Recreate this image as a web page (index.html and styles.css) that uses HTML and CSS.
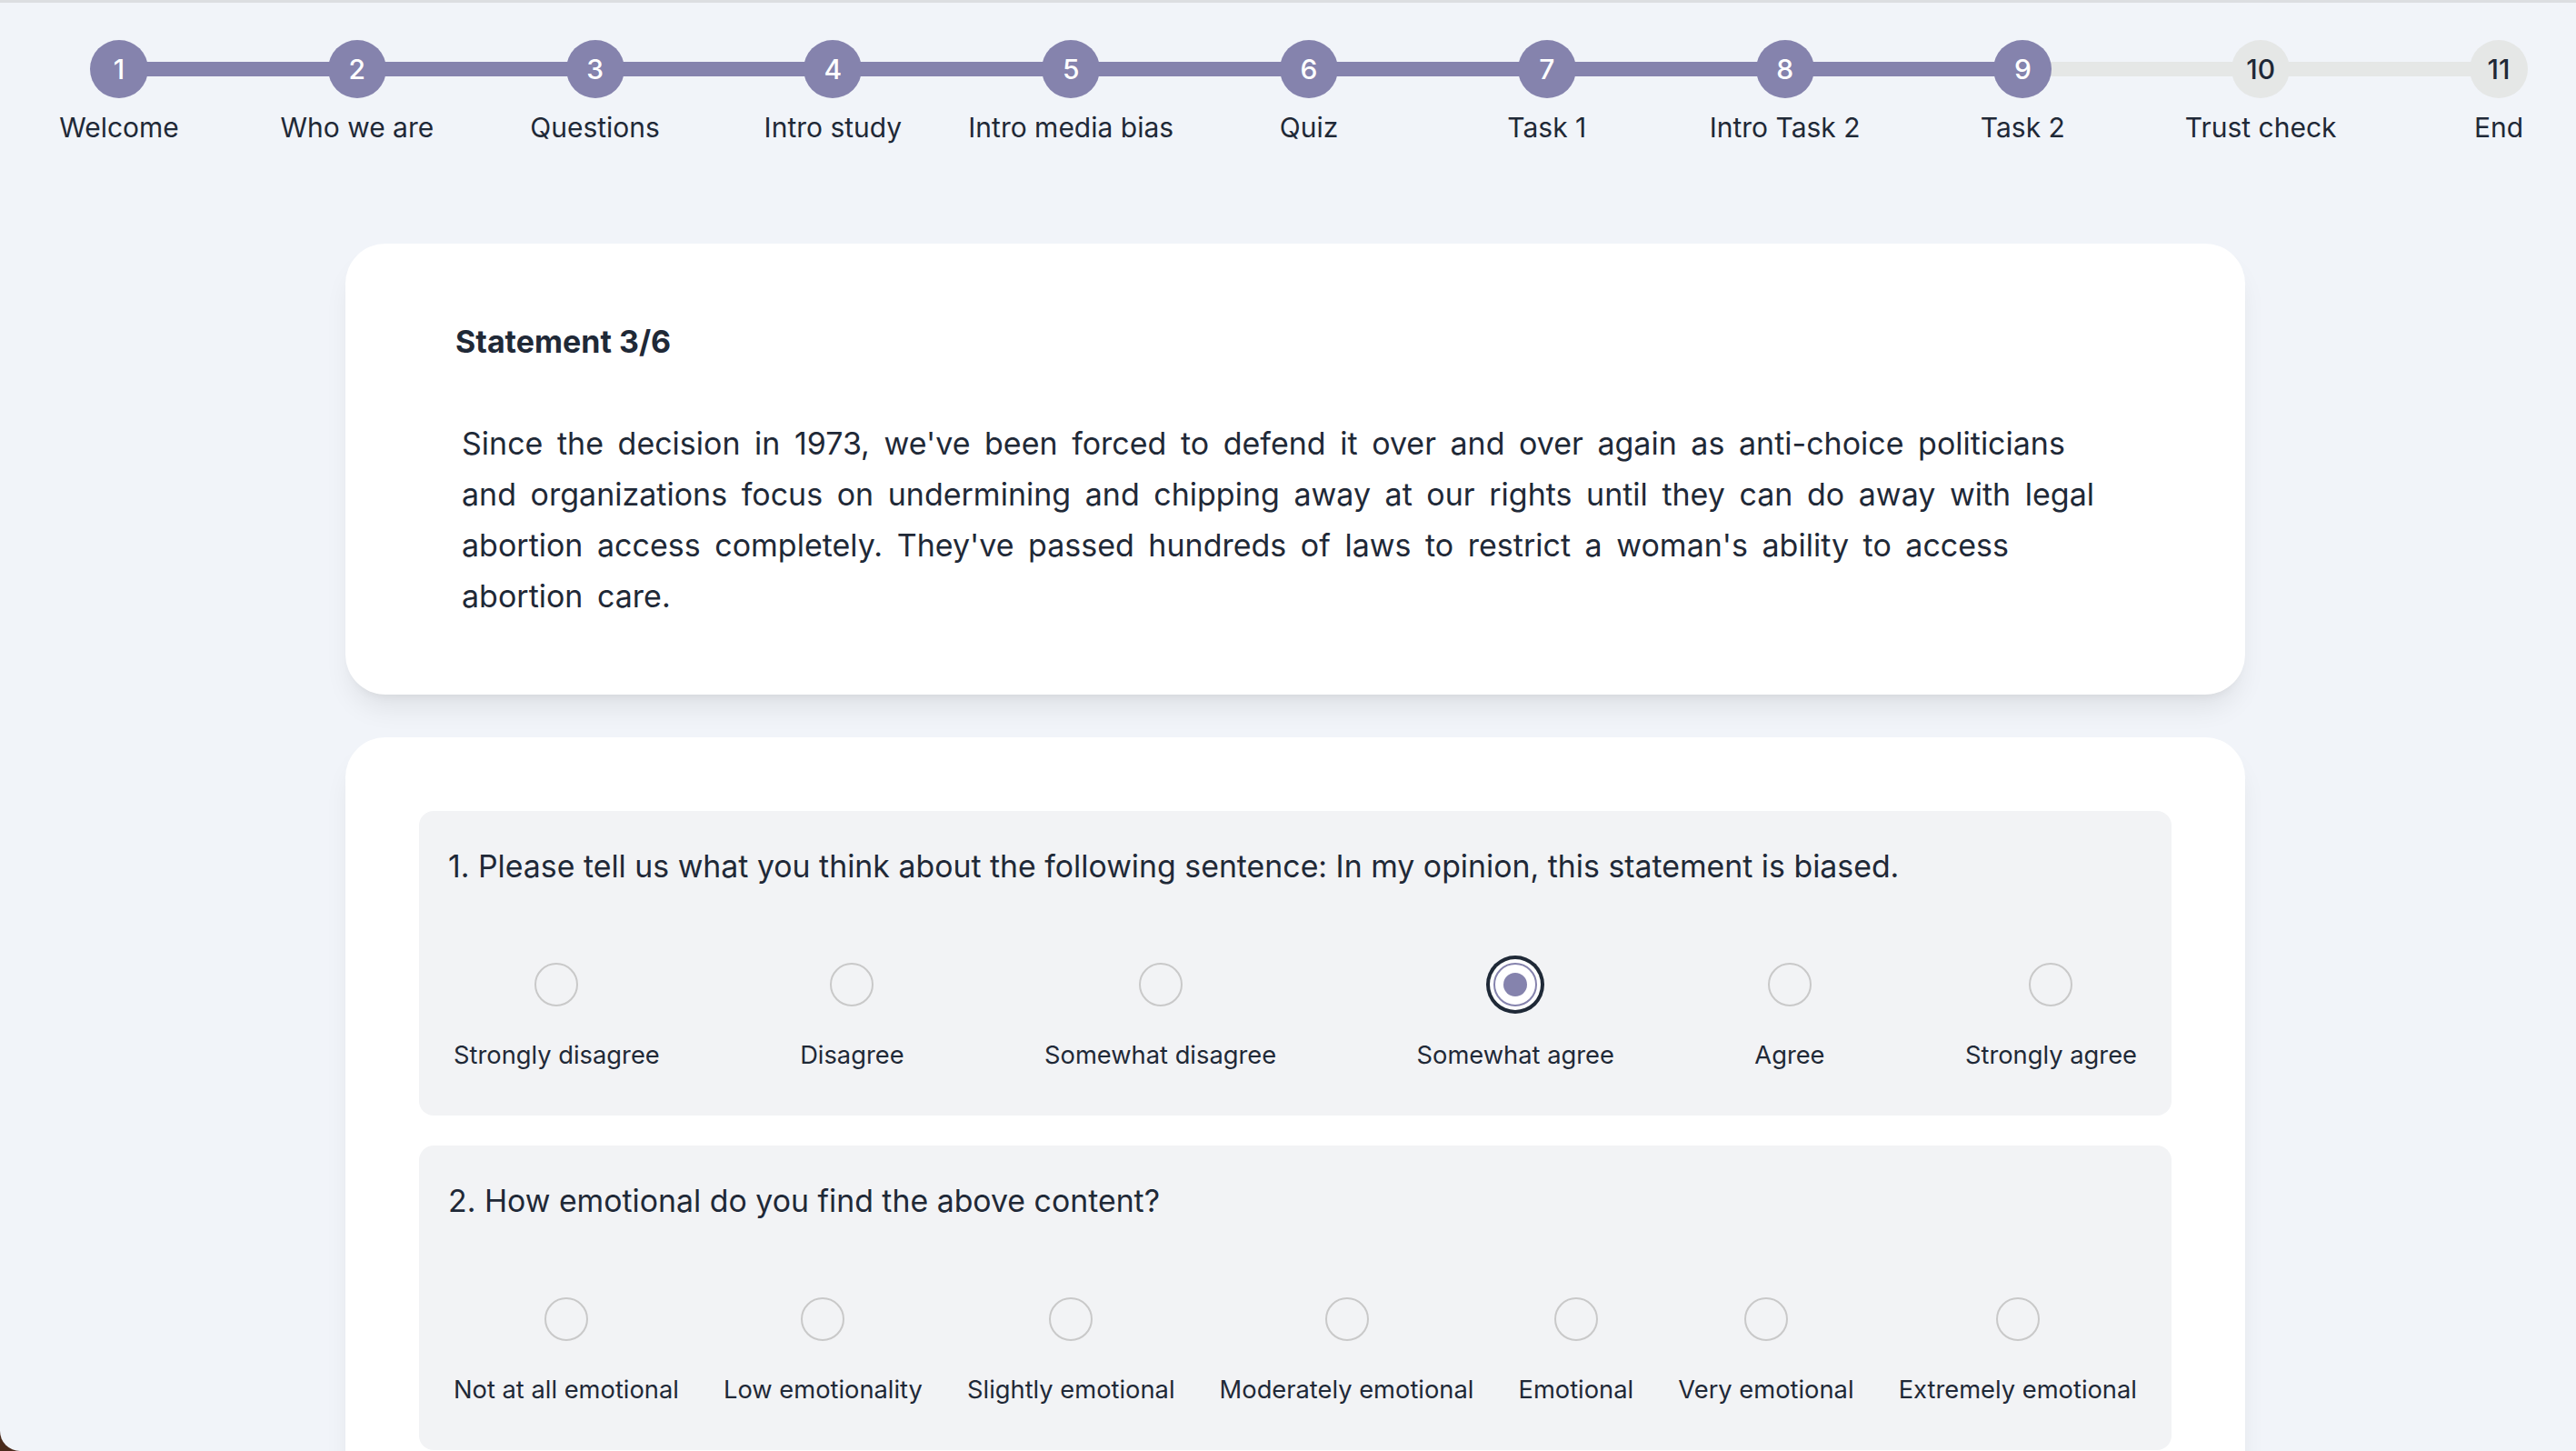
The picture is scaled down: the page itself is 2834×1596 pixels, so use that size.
FILE: index.html
```html
<!DOCTYPE html>
<html lang="en">
<head>
<meta charset="utf-8">
<title>Statement 3/6</title>
<link rel="stylesheet" href="styles.css">
</head>
<body>
<div class="page">
  <nav class="stepper">
    <div class="track"><div class="track-fill"></div></div>
    <div class="step"><span class="dot">1</span><span class="label">Welcome</span></div>
    <div class="step"><span class="dot">2</span><span class="label">Who we are</span></div>
    <div class="step"><span class="dot">3</span><span class="label">Questions</span></div>
    <div class="step"><span class="dot">4</span><span class="label">Intro study</span></div>
    <div class="step"><span class="dot">5</span><span class="label">Intro media bias</span></div>
    <div class="step"><span class="dot">6</span><span class="label">Quiz</span></div>
    <div class="step"><span class="dot">7</span><span class="label">Task 1</span></div>
    <div class="step"><span class="dot">8</span><span class="label">Intro Task 2</span></div>
    <div class="step"><span class="dot">9</span><span class="label">Task 2</span></div>
    <div class="step todo"><span class="dot">10</span><span class="label">Trust check</span></div>
    <div class="step todo"><span class="dot">11</span><span class="label">End</span></div>
  </nav>

  <main class="main">
    <section class="card statement">
      <h2 class="statement-title">Statement 3/6</h2>
      <p class="statement-text">Since the decision in 1973, we've been forced to defend it over and over again as anti-choice politicians and organizations focus on undermining and chipping away at our rights until they can do away with legal abortion access completely. They've passed hundreds of laws to restrict a woman's ability to access abortion care.</p>
    </section>

    <section class="card questions">
      <div class="question">
        <p class="q-text">1. Please tell us what you think about the following sentence: In my opinion, this statement is biased.</p>
        <div class="options">
          <label class="option"><span class="radio"></span><span class="opt-label">Strongly disagree</span></label>
          <label class="option"><span class="radio"></span><span class="opt-label">Disagree</span></label>
          <label class="option"><span class="radio"></span><span class="opt-label">Somewhat disagree</span></label>
          <label class="option"><span class="radio checked"></span><span class="opt-label">Somewhat agree</span></label>
          <label class="option"><span class="radio"></span><span class="opt-label">Agree</span></label>
          <label class="option"><span class="radio"></span><span class="opt-label">Strongly agree</span></label>
        </div>
      </div>
      <div class="question">
        <p class="q-text">2. How emotional do you find the above content?</p>
        <div class="options">
          <label class="option"><span class="radio"></span><span class="opt-label">Not at all emotional</span></label>
          <label class="option"><span class="radio"></span><span class="opt-label">Low emotionality</span></label>
          <label class="option"><span class="radio"></span><span class="opt-label">Slightly emotional</span></label>
          <label class="option"><span class="radio"></span><span class="opt-label">Moderately emotional</span></label>
          <label class="option"><span class="radio"></span><span class="opt-label">Emotional</span></label>
          <label class="option"><span class="radio"></span><span class="opt-label">Very emotional</span></label>
          <label class="option"><span class="radio"></span><span class="opt-label">Extremely emotional</span></label>
        </div>
      </div>
    </section>
  </main>
</div>
</body>
</html>
```

FILE: styles.css
```css
html {
  background: #4a2b1c;
}

body {
  margin: 0;
  font-family: Inter, "Noto Sans", "Liberation Sans", sans-serif;
  color: #1f2937;
}

.page {
  box-sizing: border-box;
  height: 1596px;
  overflow: hidden;
  background: #f1f4f9;
  border-top: 3px solid #dcdee1;
  border-bottom-left-radius: 22px;
}

/* ---------- stepper ---------- */
.stepper {
  position: relative;
  display: grid;
  grid-template-columns: repeat(11, 150px);
  column-gap: 111.8px;
  padding: 41px 0 0 56px;
}

.track {
  position: absolute;
  left: 131px;
  top: 65px;
  width: 2618px;
  height: 16px;
  background: #e5e7e6;
}

.track-fill {
  width: 2094px;
  height: 100%;
  background: #8583ad;
}

.step {
  position: relative;
  display: flex;
  flex-direction: column;
  align-items: center;
}

.dot {
  display: flex;
  align-items: center;
  justify-content: center;
  width: 64px;
  height: 64px;
  border-radius: 50%;
  background: #8583ad;
  color: #fff;
  font-size: 30px;
  font-weight: 500;
}

.step.todo .dot {
  background: #e5e7e6;
  color: #1f2937;
}

.label {
  margin-top: 10px;
  font-size: 30px;
  line-height: 45px;
  white-space: nowrap;
}

/* ---------- cards ---------- */
.main {
  width: 2090px;
  margin: 105px 0 0 380px;
}

.card {
  background: #fff;
  border-radius: 44px;
  box-shadow: 0 20px 30px -6px rgba(0, 0, 0, 0.08), 0 8px 12px -8px rgba(0, 0, 0, 0.08);
}

.statement {
  padding: 84px 120px 80px 121px;
}

.statement-title {
  margin: 0;
  font-size: 34px;
  line-height: 48px;
  font-weight: 700;
}

.statement-text {
  margin: 60px 20px 0 7px;
  font-size: 34px;
  line-height: 56px;
  word-spacing: 6px;
}

.questions {
  margin-top: 47px;
  padding: 81px 81px 80px;
}

.question {
  background: #f2f3f5;
  border-radius: 16px;
  padding: 39px 32px 47px;
}

.question + .question {
  margin-top: 33px;
}

.q-text {
  margin: 0;
  font-size: 33.85px;
  line-height: 44px;
}

.options {
  display: flex;
  justify-content: space-between;
  margin-top: 84px;
  padding: 0 6px;
}

.option {
  display: flex;
  flex-direction: column;
  align-items: center;
}

.radio {
  box-sizing: border-box;
  display: flex;
  align-items: center;
  justify-content: center;
  width: 48px;
  height: 48px;
  border: 2px solid #c9c9c9;
  border-radius: 50%;
}

.radio.checked {
  border-color: #8583ad;
  background: #fff;
  box-shadow: 0 0 0 4px #fff, 0 0 0 8px #1f2937;
}

.radio.checked::after {
  content: "";
  width: 26px;
  height: 26px;
  border-radius: 50%;
  background: #8583ad;
}

.opt-label {
  margin-top: 34px;
  font-size: 27.3px;
  line-height: 39px;
  white-space: nowrap;
}
```
